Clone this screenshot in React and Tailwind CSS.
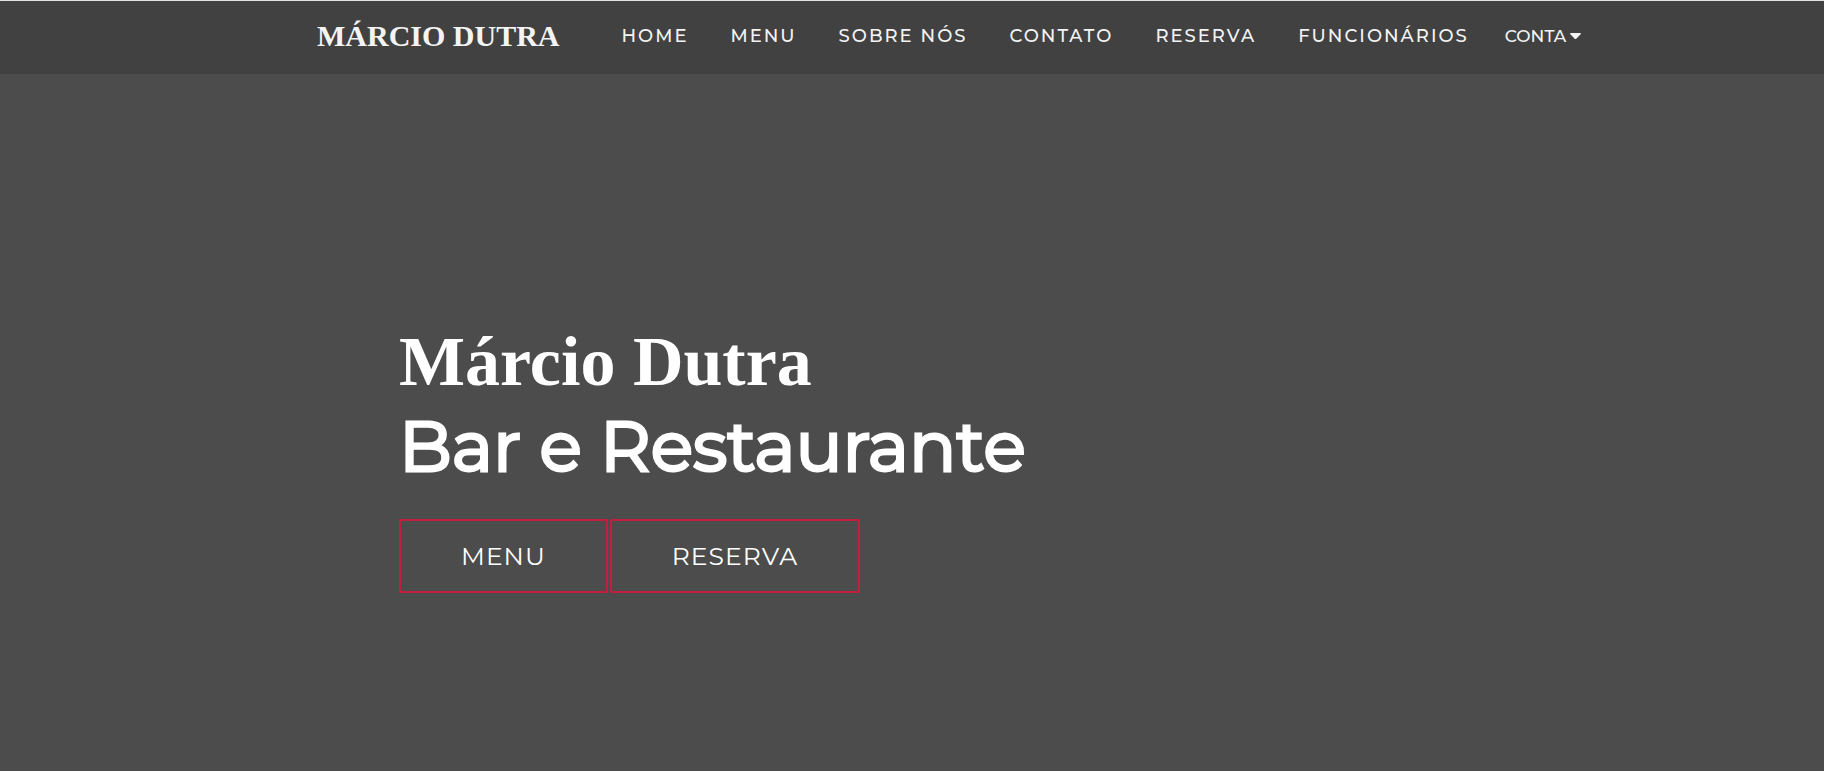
const links = [
  ['HOME', '#home'],
  ['MENU', '#menu'],
  ['SOBRE NÓS', '#sobre'],
  ['CONTATO', '#contato'],
  ['RESERVA', '#reserva'],
  ['FUNCIONÁRIOS', '#funcionarios'],
];

function Navbar() {
  return (
    <header className="border-t border-[#dfe3e2] bg-[#414141]">
      <div className="mx-auto flex h-[73px] max-w-[1190px] items-center pb-[3px]">
        <a href="#home" className="mr-[62px] font-['Liberation_Serif',serif] text-[30px] font-bold leading-[36px] whitespace-nowrap text-[#f4f4f4]">
          MÁRCIO DUTRA
        </a>
        <div className="flex items-center gap-[36px] font-medium leading-6 text-[#f4f4f4]">
          <nav className="flex items-center gap-[42px] text-lg leading-6">
            {links.map(([label, href]) => (
              <a key={label} href={href} className="whitespace-nowrap tracking-[2px]">
                {label}
              </a>
            ))}
          </nav>
          <button type="button" aria-haspopup="menu" className="flex items-center gap-1 text-[17px] leading-6">
            CONTA
            <svg aria-hidden="true" viewBox="0 0 10 6" className="h-[6px] w-[11px] fill-current" preserveAspectRatio="none">
              <path d="M.8 0h8.4c.7 0 1 .8.5 1.3L5.7 5.7a1 1 0 0 1-1.4 0L.3 1.3C-.2.8.1 0 .8 0Z" />
            </svg>
          </button>
        </div>
      </div>
    </header>
  );
}

export default function App() {
  return (
    <div className="flex min-h-screen flex-col bg-[#4c4c4c] font-['Montserrat','Inter',sans-serif] text-white">
      <Navbar />
      <main className="mx-auto w-full max-w-[1026px] flex-1 pt-[246px] pb-16">
        <h1 className="font-['Liberation_Serif',serif] text-[70px] font-bold leading-[84px]">Márcio Dutra</h1>
        <h2 className="text-[70px] font-normal leading-[84px] [-webkit-text-stroke:3px_white]">Bar e Restaurante</h2>
        <div className="mt-[31px] flex gap-[2px] text-[25px] leading-[34px] tracking-[1px]">
          <a href="#menu" className="border-2 border-[#c41e3f] px-[60px] py-[18px]">MENU</a>
          <a href="#reserva" className="border-2 border-[#c41e3f] px-[60px] py-[18px]">RESERVA</a>
        </div>
      </main>
    </div>
  );
}
